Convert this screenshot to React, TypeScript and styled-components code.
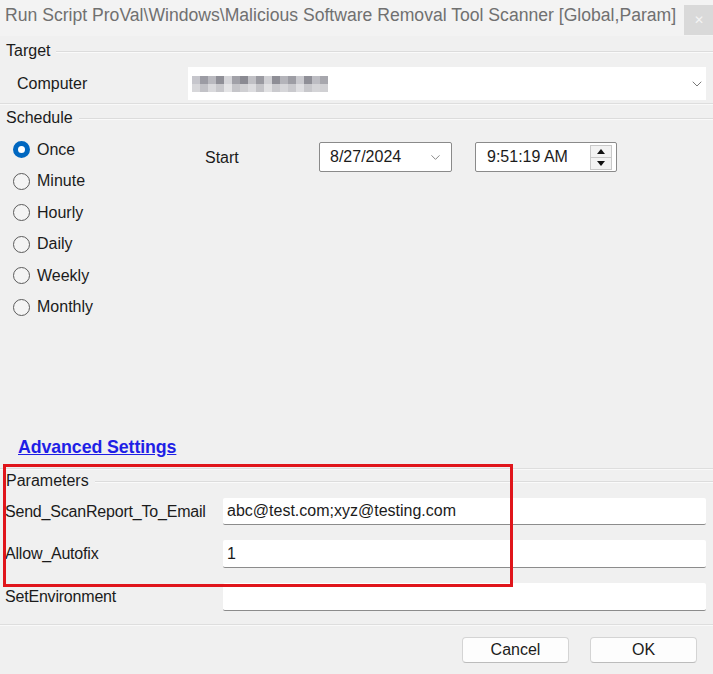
import styled, { createGlobalStyle } from 'styled-components'
import { ChevronDown } from 'lucide-react'

const GlobalStyle = createGlobalStyle`
  html, body {
    margin: 0;
    padding: 0;
    background: #f0f0f0;
  }
  body {
    font-family: "Liberation Sans", Arial, sans-serif;
    font-size: 16px;
    color: #1b1b1b;
  }
  * {
    box-sizing: border-box;
  }
`

const Window = styled.div`
  width: 713px;
  height: 674px;
  overflow: hidden;
  display: flex;
  flex-direction: column;
  background: #f0f0f0;
`

const TitleBar = styled.div`
  height: 36px;
  display: flex;
  align-items: flex-start;
  justify-content: space-between;
  background: #f3f3f3;
`

const Title = styled.div`
  padding: 5px 0 0 5px;
  font-size: 17.6px;
  color: #707070;
  white-space: nowrap;
`

const CloseButton = styled.div`
  margin-top: 5px;
  width: 29px;
  height: 30px;
  background: #d9d9d9;
  color: #f4f4f4;
  font-size: 12px;
  display: flex;
  align-items: center;
  justify-content: center;
`

const GroupHeader = styled.div<{ $top: number }>`
  margin-top: ${(p) => p.$top}px;
  height: 20px;
  display: flex;
  align-items: center;
  padding-left: 6px;
  line-height: 20px;
`

const GroupLine = styled.div`
  flex: 1;
  margin-left: 6px;
  margin-top: 2px;
  border-top: 1px solid #dcdcdc;
  border-bottom: 1px solid #fafafa;
`

const Separator = styled.div<{ $top: number }>`
  margin-top: ${(p) => p.$top}px;
  border-top: 1px solid #dedede;
  border-bottom: 1px solid #f9f9f9;
`

const FieldRow = styled.div<{ $top: number; $height: number; $labelWidth: number; $labelPad: number }>`
  margin-top: ${(p) => p.$top}px;
  height: ${(p) => p.$height}px;
  display: grid;
  align-items: center;
  padding-left: ${(p) => p.$labelPad}px;
  grid-template-columns: ${(p) => p.$labelWidth - p.$labelPad}px ${(p) => 706 - p.$labelWidth}px;
`

const FieldLabel = styled.div<{ $narrow?: boolean }>`
  white-space: nowrap;
  line-height: 20px;
  letter-spacing: ${(p) => (p.$narrow ? '-0.2px' : '0')};
`

const ComboBox = styled.div`
  height: 100%;
  background: #ffffff;
  display: flex;
  align-items: center;
  justify-content: space-between;
  padding: 0 1px 0 4px;
  color: #777;
`

const BlurredValue = styled.svg`
  display: block;
`

const ScheduleBody = styled.div`
  margin-top: 6px;
  height: 300px;
  display: grid;
  grid-template-columns: 205px 1fr;
`

const RadioList = styled.div`
  display: flex;
  flex-direction: column;
  padding-left: 13px;
`

const RadioRow = styled.label`
  height: 31.5px;
  display: flex;
  align-items: center;
  gap: 7px;
  line-height: 20px;
`

const RadioCircle = styled.span<{ $checked?: boolean }>`
  width: 17px;
  height: 17px;
  border-radius: 50%;
  flex: none;
  border: ${(p) => (p.$checked ? '5px solid #0067c0' : '1px solid #5c5c5c')};
  background: ${(p) => (p.$checked ? '#ffffff' : '#f4f4f4')};
`

const StartArea = styled.div`
  padding-top: 8px;
  display: flex;
  align-items: flex-start;
`

const StartLabel = styled.div`
  margin-top: 6px;
  width: 114px;
  line-height: 20px;
`

const PickerBox = styled.div<{ $width: number }>`
  width: ${(p) => p.$width}px;
  height: 30px;
  background: #ffffff;
  border: 1px solid #8a8a8a;
  border-radius: 2px;
  display: flex;
  align-items: center;
  justify-content: space-between;
  padding: 0 8px 0 10px;
`

const TimeBox = styled(PickerBox)`
  margin-left: 23px;
  padding: 0 4px 0 11px;
`

const Spinner = styled.div`
  width: 22px;
  height: 25px;
  display: flex;
  flex-direction: column;
`

const SpinPart = styled.div`
  flex: 1;
  display: flex;
  align-items: center;
  justify-content: center;
  background: #f2f2f2;
  border: 1px solid #c8c8c8;
  & + & {
    border-top: none;
  }
`

const AdvancedLink = styled.a`
  display: block;
  margin-top: 3px;
  height: 20px;
  line-height: 20px;
  padding-left: 18px;
  font-weight: bold;
  font-size: 17.8px;
  letter-spacing: -0.1px;
  color: #1f1fe6;
  text-decoration: underline;
  cursor: pointer;
`

const ParamSection = styled.div`
  position: relative;
`

const HighlightBox = styled.div`
  position: absolute;
  left: 3px;
  top: -6px;
  width: 510px;
  height: 123px;
  border: 3px solid #e0151b;
  pointer-events: none;
`

const TextInput = styled.div`
  height: 100%;
  background: #ffffff;
  border-bottom: 1.5px solid #8c8c8c;
  border-radius: 2px;
  padding: 0 4px;
  display: flex;
  align-items: center;
  white-space: nowrap;
`

const ButtonBar = styled.div`
  margin-top: 11px;
  display: flex;
  justify-content: flex-end;
  gap: 21px;
  padding-right: 16px;
`

const Button = styled.button`
  width: 107px;
  height: 26px;
  background: #fdfdfd;
  border: 1px solid #d4d4d4;
  border-bottom-color: #bcbcbc;
  border-radius: 4px;
  font-family: "Liberation Sans", Arial, sans-serif;
  font-size: 16px;
  color: #1b1b1b;
  padding: 0;
`

const blurBlocks = [
  ['#c6c6cc', '#9c9ca4', '#b9b9bf', '#8f8f97', '#d5d5d9', '#a1a1a8', '#8a8a92', '#c0c0c5', '#9a9aa1', '#d0d0d4', '#8e8e96', '#b4b4ba', '#9d9da4', '#c9c9ce', '#8f8f97', '#bdbdc3', '#a7a7ad'],
  ['#d7d7da', '#c2c2c7', '#d9d9dc', '#c8c8cc', '#e4e4e6', '#c5c5c9', '#cfcfd2', '#dcdcdf', '#c4c4c8', '#e1e1e3', '#cacace', '#d6d6d9', '#c9c9cd', '#dedee1', '#c7c7cb', '#d4d4d7', '#d0d0d3'],
]

const radios = ['Once', 'Minute', 'Hourly', 'Daily', 'Weekly', 'Monthly']

const params = [
  { name: 'Send_ScanReport_To_Email', value: 'abc@test.com;xyz@testing.com', top: 7, height: 27 },
  { name: 'Allow_Autofix', value: '1', top: 15, height: 28 },
  { name: 'SetEnvironment', value: '', top: 15, height: 28 },
]

const App = () => {
  return (
    <>
      <GlobalStyle />
      <Window>
        <TitleBar>
          <Title>Run Script ProVal\Windows\Malicious Software Removal Tool Scanner [Global,Param]</Title>
          <CloseButton>✕</CloseButton>
        </TitleBar>

        <GroupHeader $top={5}>
          Target
          <GroupLine />
        </GroupHeader>
        <FieldRow $top={6} $height={33} $labelWidth={188} $labelPad={17}>
          <FieldLabel>Computer</FieldLabel>
          <ComboBox>
            <BlurredValue width="136" height="16" viewBox="0 0 136 16">
              {blurBlocks.map((row, r) =>
                row.map((c, i) => <rect key={`${r}-${i}`} x={i * 8} y={r * 8} width="8" height="8" fill={c} />)
              )}
            </BlurredValue>
            <ChevronDown size={16} strokeWidth={1.4} color="#6e6e6e" />
          </ComboBox>
        </FieldRow>
        <Separator $top={3} />

        <GroupHeader $top={3}>
          Schedule
          <GroupLine />
        </GroupHeader>
        <ScheduleBody>
          <RadioList>
            {radios.map((r, i) => (
              <RadioRow key={r}>
                <RadioCircle $checked={i === 0} />
                {r}
              </RadioRow>
            ))}
          </RadioList>
          <StartArea>
            <StartLabel>Start</StartLabel>
            <PickerBox $width={133}>
              8/27/2024
              <ChevronDown size={15} strokeWidth={1.4} color="#777" />
            </PickerBox>
            <TimeBox $width={142}>
              9:51:19 AM
              <Spinner>
                <SpinPart>
                  <svg width="8" height="5" viewBox="0 0 8 5">
                    <path d="M0 5 L4 0 L8 5 Z" fill="#111" />
                  </svg>
                </SpinPart>
                <SpinPart>
                  <svg width="8" height="5" viewBox="0 0 8 5">
                    <path d="M0 0 L8 0 L4 5 Z" fill="#111" />
                  </svg>
                </SpinPart>
              </Spinner>
            </TimeBox>
          </StartArea>
        </ScheduleBody>

        <AdvancedLink>Advanced Settings</AdvancedLink>
        <Separator $top={11} />

        <ParamSection>
          <HighlightBox />
          <GroupHeader $top={1}>
            Parameters
            <GroupLine />
          </GroupHeader>
          {params.map((p) => (
            <FieldRow key={p.name} $top={p.top} $height={p.height} $labelWidth={223} $labelPad={5}>
              <FieldLabel $narrow>{p.name}</FieldLabel>
              <TextInput>{p.value}</TextInput>
            </FieldRow>
          ))}
        </ParamSection>
        <Separator $top={13} />

        <ButtonBar>
          <Button>Cancel</Button>
          <Button>OK</Button>
        </ButtonBar>
      </Window>
    </>
  )
}

export default App
